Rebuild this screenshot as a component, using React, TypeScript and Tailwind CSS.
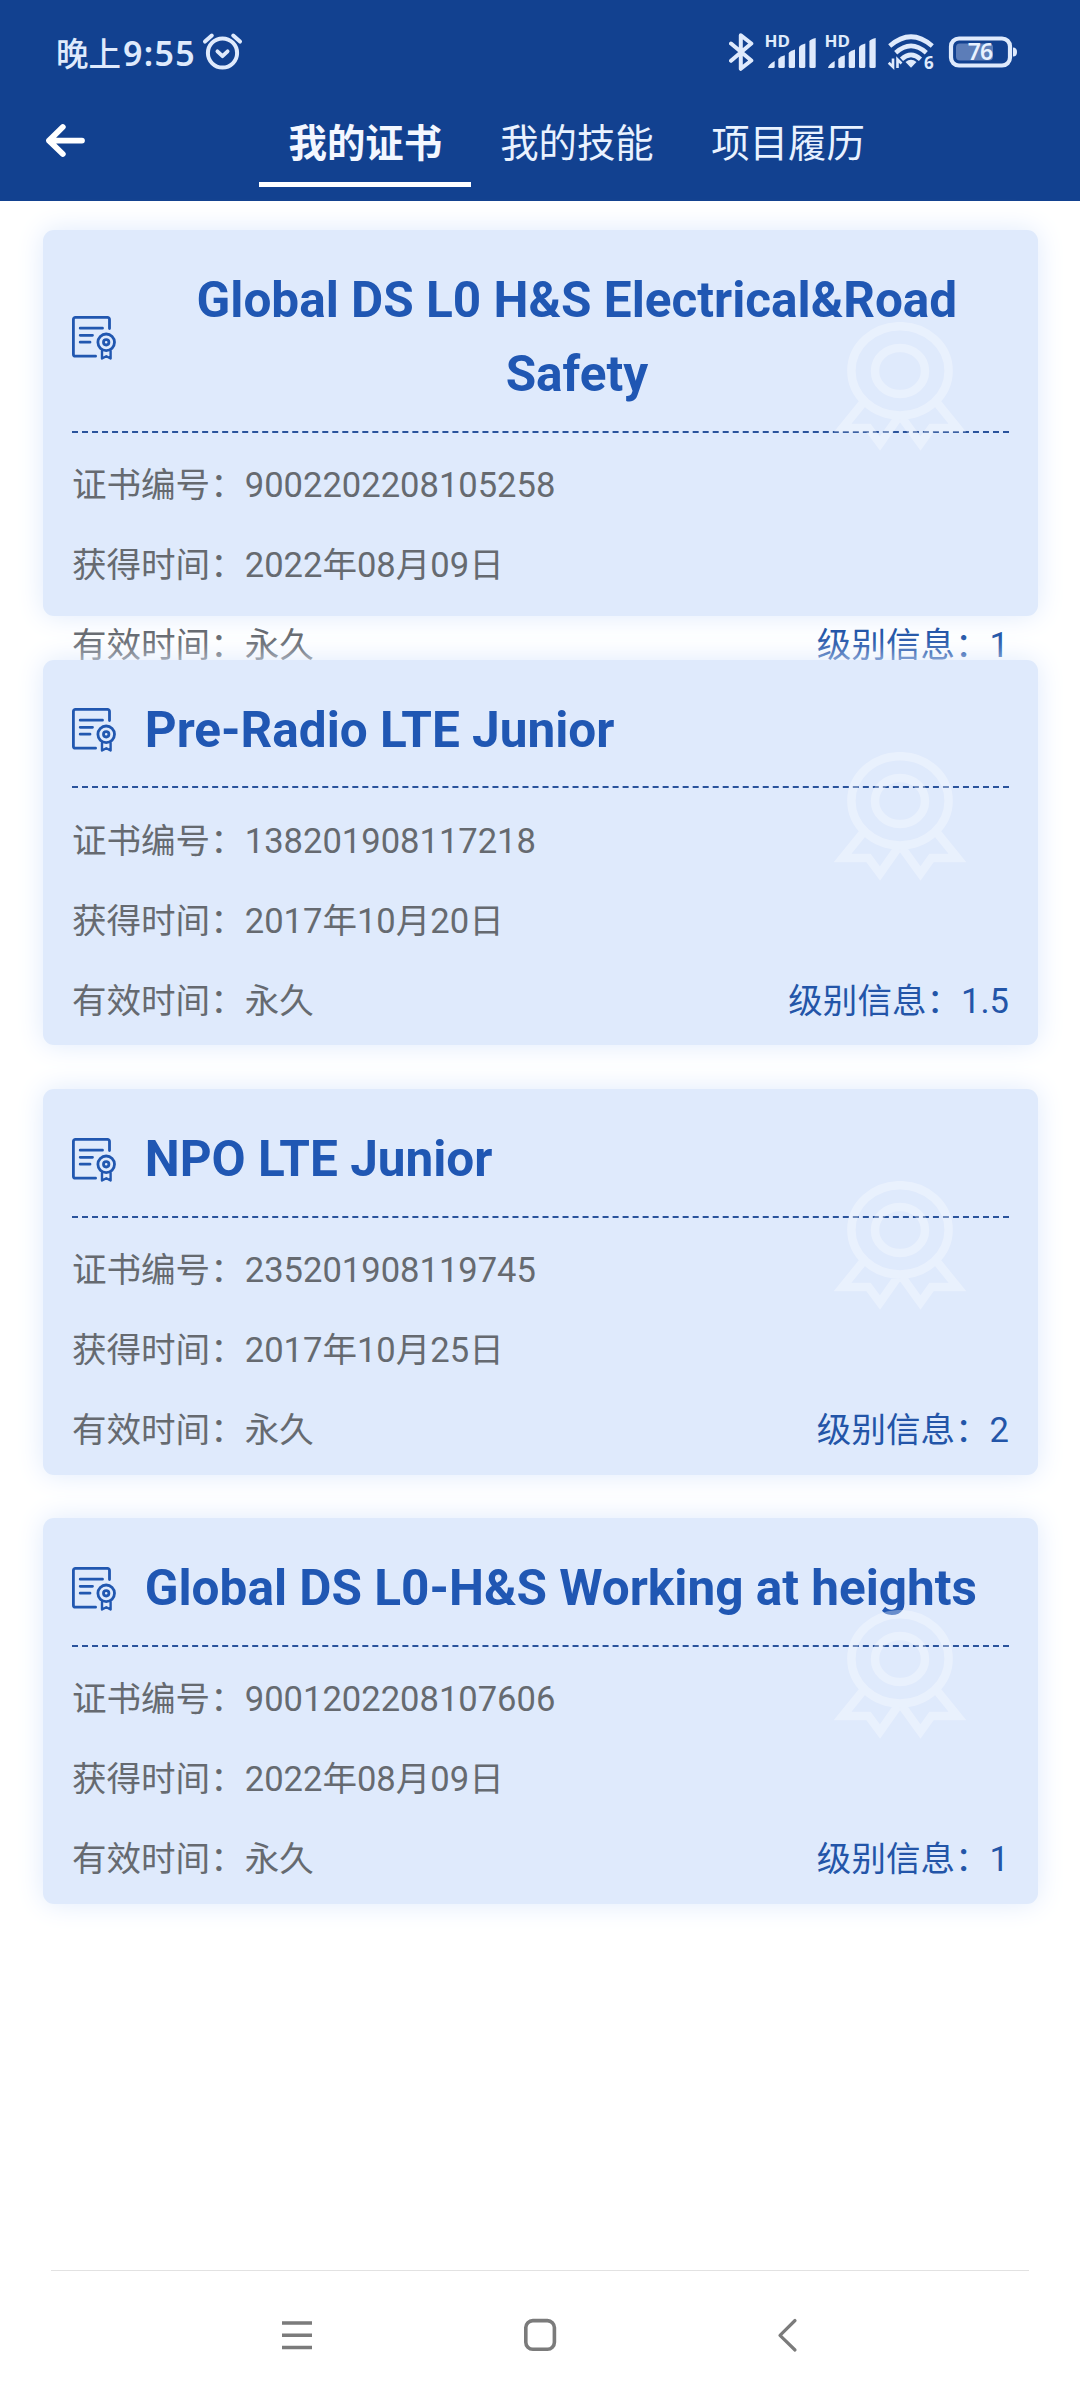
import React from "react";

type Certificate = {
  title: string;
  number: string;
  date: string;
  validity: string;
  level: string;
};

const certificates: Certificate[] = [
  { title: "Global DS L0 H&S Electrical&Road Safety", number: "9002202208105258", date: "2022年08月09日", validity: "永久", level: "1" },
  { title: "Pre-Radio LTE Junior", number: "138201908117218", date: "2017年10月20日", validity: "永久", level: "1.5" },
  { title: "NPO LTE Junior", number: "235201908119745", date: "2017年10月25日", validity: "永久", level: "2" },
  { title: "Global DS L0-H&S Working at heights", number: "9001202208107606", date: "2022年08月09日", validity: "永久", level: "1" },
];

const tabs = ["我的证书", "我的技能", "项目履历"];

function AlarmIcon() {
  return (
    <svg className="h-[40px] w-[42px]" viewBox="0 0 42 40" fill="none" stroke="#dfeafc">
      <circle cx="20.5" cy="21" r="14.6" strokeWidth="4" />
      <path d="M15.4 19.3l5.1 4.9 5.1-4.9" strokeWidth="3.8" strokeLinecap="round" strokeLinejoin="round" />
      <path d="M3 9.6l6.8-6M38 9.6l-6.8-6" strokeWidth="4" strokeLinecap="round" />
    </svg>
  );
}

function BluetoothIcon() {
  return (
    <svg className="h-[40px] w-[26px]" viewBox="0 0 26 40" fill="none" stroke="#dfeafc" strokeWidth="4" strokeLinecap="round" strokeLinejoin="round">
      <path d="M2 11.5L22.300 28.5L11.800 36.8V3.2L22.300 11.5L2 28.8" />
    </svg>
  );
}

function SignalIcon() {
  return (
    <svg className="h-[34px] w-[52px] overflow-visible" viewBox="0 0 52 34" fill="#dfeafc">
      <text x="-1.5" y="12.4" fontFamily="Noto Sans, sans-serif" fontSize="16.5" fontWeight="700" textLength="25.5" lengthAdjust="spacingAndGlyphs">HD</text>
      <path d="M2 33Q2.600 29.500 8.700 26V31.500Q8.700 33 7.200 33Z" />
      <path d="M12.300 24.500Q12.300 22.500 18.800 20.300V31.500Q18.800 33 17.300 33H13.800Q12.300 33 12.300 31.500Z" />
      <path d="M22.700 18.500Q22.700 16.500 29 14.500V31.500Q29 33 27.500 33H24.200Q22.700 33 22.700 31.500Z" />
      <path d="M33 12.500Q33 10.500 39.300 8.500V31.500Q39.300 33 37.800 33H34.500Q33 33 33 31.500Z" />
      <path d="M43.400 6.500Q43.400 4.500 49.700 3V31.500Q49.700 33 48.200 33H44.900Q43.400 33 43.400 31.500Z" />
    </svg>
  );
}

function WifiIcon() {
  return (
    <svg className="h-[38px] w-[48px] overflow-visible" viewBox="0 0 48 38" fill="none" stroke="#dfeafc" strokeWidth="4.600">
      <path d="M1.700 13Q23 -5.500 44.300 13" />
      <path d="M7.700 19.700Q23 6 38.300 19.700" />
      <path d="M13.500 26.200Q23 17.500 32.500 26.200" />
      <path d="M23 34.800l-5.500-5.800q5.500-4.500 11 0z" fill="#dfeafc" stroke="none" />
      <path d="M5 25.500V34L0.700 29.800M9.500 35V26.500L13.500 30.500" strokeWidth="2.600" />
      <text x="36" y="35.500" fontFamily="Noto Sans, sans-serif" fontSize="17" fontWeight="700" fill="#dfeafc" stroke="none">6</text>
    </svg>
  );
}

function BatteryIcon() {
  return (
    <svg className="h-[32px] w-[69px] overflow-visible" viewBox="0 0 69 32">
      <rect x="2" y="2.500" width="59" height="27" rx="8" fill="none" stroke="#dfeafc" strokeWidth="4.200" />
      <rect x="7" y="7.500" width="37" height="17" rx="4" fill="#5c7db8" />
      <path d="M64 11.500Q68 11.500 68 16T64 20.500Z" fill="#dfeafc" />
      <text x="31" y="24" textAnchor="middle" fontFamily="Noto Sans, sans-serif" fontSize="23" fontWeight="600" letterSpacing="-1" fill="#e8f1ff">76</text>
    </svg>
  );
}

function StatusBar() {
  return (
    <div className="flex h-[103px] items-center justify-between pr-[62px] pl-[56px] font-['Noto_Sans','Noto_Sans_CJK_SC',sans-serif]">
      <div className="flex items-center">
        <div className="flex w-[146px] items-baseline pt-[2px] leading-[40px] font-semibold whitespace-nowrap text-[#dfeafc]">
          <span className="font-['Noto_Sans_CJK_SC',sans-serif] text-[32.5px] font-medium">晚上</span>
          <span className="ml-[2px] text-[34px] tracking-[1.3px]">9:55</span>
        </div>
        <AlarmIcon />
      </div>
      <div className="flex items-center">
        <BluetoothIcon />
        <div className="ml-[11px] flex gap-[8px]">
          <SignalIcon />
          <SignalIcon />
        </div>
        <div className="ml-[10px]">
          <WifiIcon />
        </div>
        <div className="ml-[13px]">
          <BatteryIcon />
        </div>
      </div>
    </div>
  );
}

function Header() {
  return (
    <header className="h-[201px] bg-[#124190]">
      <StatusBar />
      <div className="flex h-[84px] items-start">
        <button className="mt-[19px] ml-[44px] h-[38px] w-[44px]" aria-label="返回">
          <svg viewBox="0 0 44 38" className="h-[38px] w-[44px]" fill="none" stroke="#fff" strokeWidth="5.800" strokeLinecap="round" strokeLinejoin="round">
            <path d="M38 18.600H5M18.800 5L5 18.600L18.800 32" />
          </svg>
        </button>
        <nav className="ml-[171.2px] flex">
          {tabs.map((tab, i) => (
            <div
              key={tab}
              className={
                i === 0
                  ? "h-[84px] border-b-[5px] border-white pr-[28.8px] pl-[29.4px] text-[38.4px] leading-[81px] font-bold text-[#f3f7ff]"
                  : "h-[84px] pr-[28.4px] pl-[29.2px] text-[38.4px] leading-[81px] text-[#e9f2ff]"
              }
            >
              {tab}
            </div>
          ))}
        </nav>
      </div>
    </header>
  );
}

function CertificateIcon() {
  return (
    <svg className="h-[44px] w-[44px] shrink-0" viewBox="0 0 44 44" fill="none" stroke="#2157b0" strokeWidth="2.800" strokeLinecap="round" strokeLinejoin="round">
      <path d="M37.500 12.500V3.400a2 2 0 0 0-2-2H3.400a2 2 0 0 0-2 2V38.200a2 2 0 0 0 2 2H23.600" />
      <path d="M8.200 12.200H30.500M8.200 19.300H20.500M8.200 26.200H18" />
      <circle cx="34.200" cy="26.300" r="8.300" />
      <circle cx="34.200" cy="26.300" r="2.700" />
      <path d="M30 35V42.500L34.300 40.200L38.600 42.500V35" strokeWidth="2.400" />
    </svg>
  );
}

function MedalWatermark() {
  return (
    <svg className="absolute top-[92px] right-[72px] h-[130px] w-[132px]" viewBox="0 0 132 130" fill="none" stroke="#fff" strokeOpacity="0.330" strokeWidth="8.500">
      <path d="M66 4.200C92.500 4.200 114.600 24 114.600 48.800S92.500 93.500 66 93.500S17.400 73.600 17.400 48.800S39.500 4.200 66 4.200ZM66 26C80 26 91 36 91 49S80 72 66 72S41 62 41 49S52 26 66 26ZM28 82L8.500 106H34.500L46 121.500L63.500 96.500M68.500 96.500L86.500 121.500L97.500 106H123.500L104 82" />
    </svg>
  );
}

function Card({ item }: { item: Certificate }) {
  return (
    <article className="relative h-[385.9px] rounded-[11px] bg-[#dfeafc] px-[28.8px] pt-[34px] shadow-[0_0_28px_#dfeafc]">
      <div className="flex items-center border-b-2 border-dashed border-[#2a539c] pb-[19.3px]">
        <CertificateIcon />
        <h2 className="ml-[28.8px] text-center text-[49.5px] leading-[73.5px] font-bold text-[#2057b3]">{item.title}</h2>
      </div>
      <div className="pt-[13.6px] text-[34.56px] leading-[79.8px] text-[#666a70]">
        <p>证书编号：{item.number}</p>
        <p>获得时间：{item.date}</p>
        <div className="flex justify-between">
          <p>有效时间：{item.validity}</p>
          <p className="text-[#2355a8]">级别信息：{item.level}</p>
        </div>
      </div>
      <MedalWatermark />
    </article>
  );
}

function NavigationBar() {
  return (
    <footer className="mx-[51px] flex h-[130px] items-start border-t border-[#e2e2e2] pt-[46px] text-[#7b7b7b]">
      <svg className="ml-[230px] h-[38px] w-[32px]" viewBox="0 0 32 38" stroke="currentColor" strokeWidth="3.400">
        <path d="M1 6H31M1 18.300H31M1 30.500H31" />
      </svg>
      <svg className="ml-[210px] h-[36px] w-[36px]" viewBox="0 0 36 36" fill="none" stroke="currentColor" strokeWidth="3.600">
        <rect x="2.800" y="3.600" width="28.600" height="28.600" rx="7" />
      </svg>
      <svg className="ml-[217px] h-[38px] w-[24px]" viewBox="0 0 24 38" fill="none" stroke="currentColor" strokeWidth="3.200" strokeLinecap="round" strokeLinejoin="round">
        <path d="M19 3.500L4 18.300L19 33" />
      </svg>
    </footer>
  );
}

export default function App() {
  return (
    <div className="flex h-[2400px] w-[1080px] flex-col overflow-hidden bg-white font-[Roboto,'Noto_Sans_CJK_SC',sans-serif]">
      <Header />
      <main className="flex flex-1 flex-col gap-[43.3px] pt-[29.4px] pr-[42.2px] pl-[43.2px]">
        {certificates.map((item) => (
          <Card key={item.number} item={item} />
        ))}
      </main>
      <NavigationBar />
    </div>
  );
}
